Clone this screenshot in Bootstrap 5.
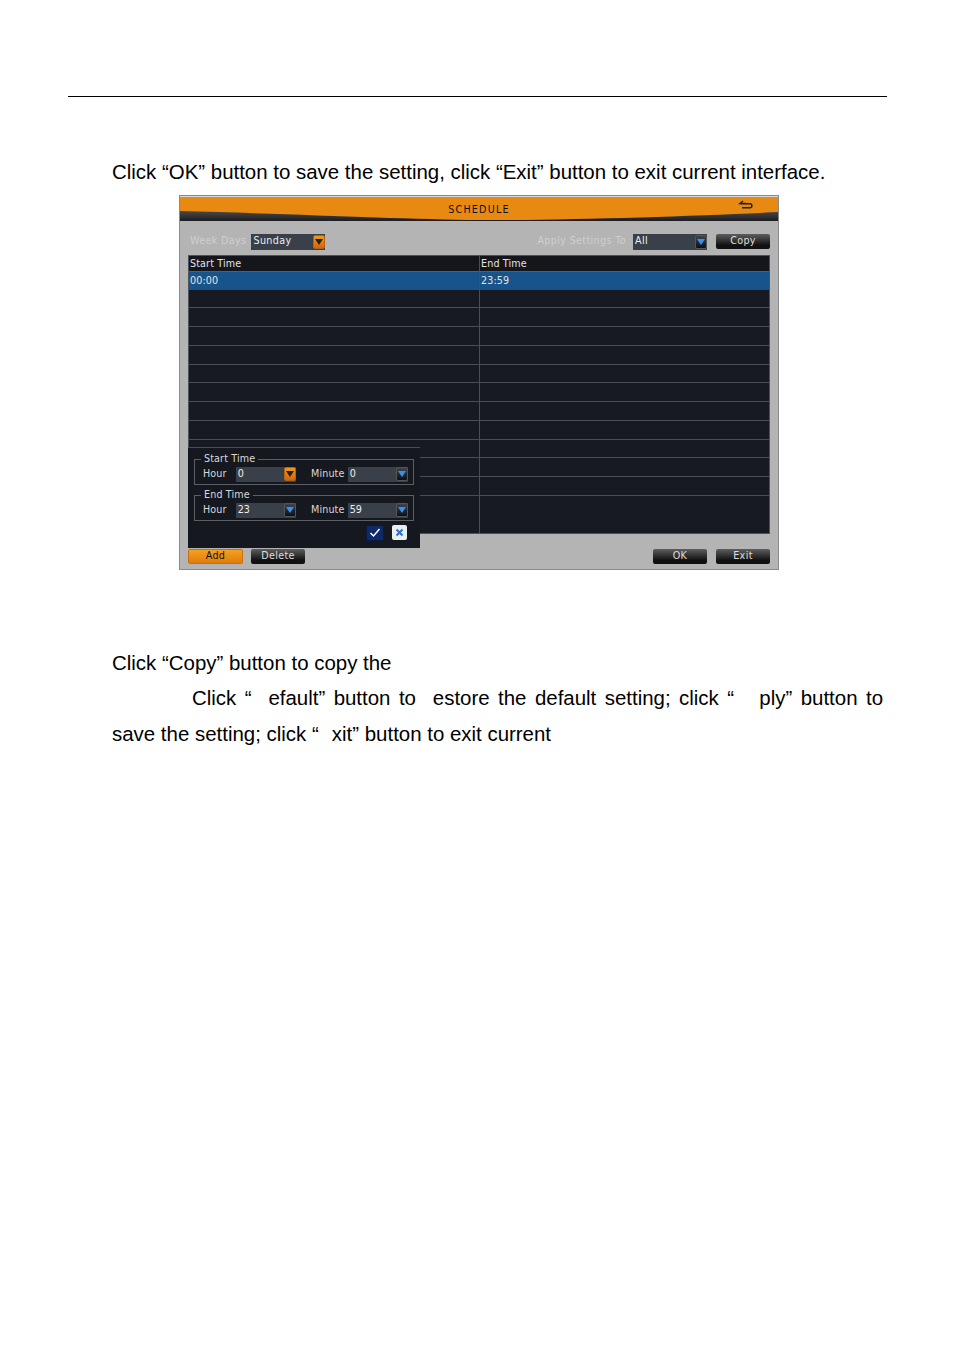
<!DOCTYPE html>
<html lang="en">
<head>
<meta charset="utf-8">
<title>Schedule</title>
<link href="https://cdn.jsdelivr.net/npm/bootstrap@5.3.0/dist/css/bootstrap.min.css" rel="stylesheet">
<style>
html,body{background:#fff;margin:0}
body{font-family:"Liberation Sans",Arial,sans-serif;color:#000;height:1354px;overflow:hidden}
.doc-rule{margin:96px 67px 0 68px;border-top:1px solid #000}
.doc-line{font-size:20.45px;line-height:35.5px;margin:0 71px 0 112px;white-space:nowrap}
.doc-first{margin-top:57px}
.doc-after{margin-top:75px}
.doc-just{padding-left:80px;text-align:justify;text-align-last:justify;white-space:normal}
.dvr-wrap{margin:5px 0 0 179px;width:600px;height:375px;position:relative;border:1px solid #8a8a8a;background:#b4b4b4;font-family:"DejaVu Sans",sans-serif;font-size:9.6px;letter-spacing:.35px;color:#d8d8d8}
.dvr-title{height:25px;background:#e88a12;position:relative;color:#111;text-align:center;line-height:26px;letter-spacing:1.2px;font-weight:500;border-top:1px solid #d9d9d9}
.dvr-title svg{position:absolute;left:0;top:0}
.dvr-title span{position:relative}
.dvr-tools{height:34px;padding:8px 8px 0 10px}
.dvr-lbl{color:#cfcfcf}
.dvr-sel{height:16px;background:#39404a;color:#eee;display:flex;align-items:center;padding-left:2px;justify-content:space-between}
.dvr-arrow{width:12px;height:14px;border-radius:2px;background:linear-gradient(#3d4550,#0c0f14);display:flex;align-items:center;justify-content:center;border:1px solid #555}
.dvr-arrow.hot{background:linear-gradient(#f19a1c,#d8620e);border-color:#b5620f}
.dvr-arrow i{width:0;height:0;border-left:4px solid transparent;border-right:4px solid transparent;border-top:6px solid #3c8df0}
.dvr-arrow.hot i{border-top-color:#222}
.dvr-btn{width:54px;height:15px;border-radius:2px;background:linear-gradient(#5e5e5e,#111 75%);color:#ddd;display:flex;align-items:center;justify-content:center}
.dvr-btn.hot{background:linear-gradient(#f5a021,#e07c0c);color:#111;border:1px solid #c8700e;width:55px}
.dvr-grid{margin-left:8px;width:582px;height:279px;background:#181a23;border:1px solid #4f5258;color:#e3e3e3;display:flex;flex-direction:column;letter-spacing:.12px}
.dvr-row{display:grid;grid-template-columns:291px 1fr;height:18.750px;flex:none;border-bottom:1px solid #4a4d55;line-height:17px}
.dvr-row>div{padding-left:1px;border-right:1px solid #4a4d55}
.dvr-row>div:last-child{border-right:0;padding-left:1px}
.dvr-head{height:16px;line-height:16px;background:#14161c;border-bottom:1px solid #5a5d64}
.dvr-sel-row{height:18px;background:#18548c;border-bottom-color:#18548c}
.dvr-end{flex:1;border-bottom:0}
.dvr-foot{padding:15px 8px 0}
.dvr-pop{position:absolute;left:8px;top:251px;width:232px;height:101px;background:#16181f;border-top:1px solid #4a4d55;padding:11px 6px 0;color:#d8d8d8;letter-spacing:.12px}
.dvr-pop fieldset{border:1px solid #5c5f66;height:26px;padding:0 5px 0 8px;margin-bottom:10px;position:relative}
.dvr-pop legend{position:absolute;left:6px;top:-8px;width:auto;float:none;background:#16181f;font-size:9.6px;line-height:13px;margin:0;padding:0 3px;letter-spacing:.12px}
.dvr-field-row{padding-top:7px;align-items:center}
.dvr-h{width:33px}
.dvr-m{width:36px;margin-left:15px;margin-right:1px;white-space:nowrap}
.dvr-pop .dvr-sel{height:15px;width:61px}
.dvr-ok,.dvr-no{display:flex;align-items:center;justify-content:center}
.dvr-ok{width:18px;height:16px;background:#0f2a66;border:1px solid #0a1a44}
.dvr-no{width:15px;height:15px;background:#e8eef4;border-radius:2px}
.dvr-confirm{margin-top:-6px;padding-right:7px}
.dvr-sel-wide{width:74px}
.dvr-gap-a{margin-left:5px}
.dvr-gap-b{margin-left:7px}
.dvr-gap-c{margin-left:9px}
.dvr-gap-d{margin-left:8px}
</style>
</head>
<body>
<div class="doc-rule"></div>
<p class="doc-line doc-first">Click “OK” button to save the setting, click “Exit” button to exit current interface.</p>
<div class="dvr-wrap">
  <div class="dvr-title">
    <svg width="598" height="24" viewBox="0 0 598 24"><defs><linearGradient id="dk" x1="0" y1="0" x2="0" y2="1"><stop offset="0" stop-color="#4a4a4a"/><stop offset="1" stop-color="#1c1c20"/></linearGradient></defs><path d="M0 14 C120 17 220 22 300 23 C400 23 510 19 598 15 V24 H0Z" fill="url(#dk)"/><path d="M566 6.500h-6l3-2.500M560 6.800h10c2.500 0 2.500 4 0 4h-8" fill="none" stroke="#222" stroke-width="1.500"/></svg>
    <span>SCHEDULE</span>
  </div>
  <div class="dvr-tools d-flex align-items-center">
    <span class="dvr-lbl">Week Days</span>
    <div class="dvr-sel dvr-sel-wide dvr-gap-a"><span>Sunday</span><span class="dvr-arrow hot"><i></i></span></div>
    <span class="dvr-lbl ms-auto">Apply Settings To</span>
    <div class="dvr-sel dvr-sel-wide dvr-gap-b"><span>All</span><span class="dvr-arrow"><i></i></span></div>
    <div class="dvr-btn dvr-gap-c">Copy</div>
  </div>
  <div class="dvr-grid">
    <div class="dvr-row dvr-head"><div>Start Time</div><div>End Time</div></div>
    <div class="dvr-row dvr-sel-row"><div>00:00</div><div>23:59</div></div>
    <div class="dvr-row"><div></div><div></div></div>
    <div class="dvr-row"><div></div><div></div></div>
    <div class="dvr-row"><div></div><div></div></div>
    <div class="dvr-row"><div></div><div></div></div>
    <div class="dvr-row"><div></div><div></div></div>
    <div class="dvr-row"><div></div><div></div></div>
    <div class="dvr-row"><div></div><div></div></div>
    <div class="dvr-row"><div></div><div></div></div>
    <div class="dvr-row"><div></div><div></div></div>
    <div class="dvr-row"><div></div><div></div></div>
    <div class="dvr-row"><div></div><div></div></div>
    <div class="dvr-row dvr-end"><div></div><div></div></div>
  </div>
  <div class="dvr-foot d-flex">
    <div class="dvr-btn hot">Add</div>
    <div class="dvr-btn dvr-gap-d">Delete</div>
    <div class="dvr-btn ms-auto">OK</div>
    <div class="dvr-btn dvr-gap-c">Exit</div>
  </div>
  <div class="dvr-pop">
    <fieldset>
      <legend>Start Time</legend>
      <div class="d-flex dvr-field-row">
        <span class="dvr-h">Hour</span>
        <div class="dvr-sel"><span>0</span><span class="dvr-arrow hot"><i></i></span></div>
        <span class="dvr-m">Minute</span>
        <div class="dvr-sel"><span>0</span><span class="dvr-arrow"><i></i></span></div>
      </div>
    </fieldset>
    <fieldset>
      <legend>End Time</legend>
      <div class="d-flex dvr-field-row">
        <span class="dvr-h">Hour</span>
        <div class="dvr-sel"><span>23</span><span class="dvr-arrow"><i></i></span></div>
        <span class="dvr-m">Minute</span>
        <div class="dvr-sel"><span>59</span><span class="dvr-arrow"><i></i></span></div>
      </div>
    </fieldset>
    <div class="d-flex justify-content-end align-items-center gap-2 dvr-confirm">
      <div class="dvr-ok"><svg width="12" height="10" viewBox="0 0 12 10"><path d="M1.500 5l3 3 6-7" fill="none" stroke="#fff" stroke-width="1.500"/></svg></div>
      <div class="dvr-no"><svg width="9" height="9" viewBox="0 0 9 9"><path d="M1.500 1.500l6 6M7.500 1.500l-6 6" stroke="#2f6fd0" stroke-width="2"/></svg></div>
    </div>
  </div>
</div>
<p class="doc-line doc-after">Click “Copy” button to copy the</p>
<p class="doc-line doc-just">Click “&nbsp; efault” button to &nbsp;estore the default setting; click “ &nbsp; ply” button to</p>
<p class="doc-line">save the setting; click “ &nbsp;&#8202;xit” button to exit current</p>
<script src="https://cdn.jsdelivr.net/npm/bootstrap@5.3.0/dist/js/bootstrap.bundle.min.js"></script>
</body>
</html>
